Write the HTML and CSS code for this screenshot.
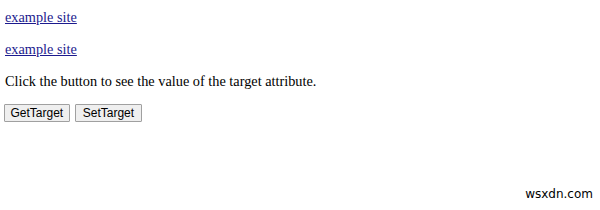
FILE: index.html
```html
<!DOCTYPE html>
<html>
<head>
<meta charset="utf-8">
<link rel="stylesheet" href="styles.css">
</head>
<body class="page">
<p class="row"><a class="link" href="#">example site</a></p>
<p class="row"><a class="link" href="#">example site</a></p>
<p class="row">Click the button to see the value of the target attribute.</p>
<div class="buttons">
<button class="btn">GetTarget</button>
<button class="btn btn-set">SetTarget</button>
</div>
<div class="watermark">wsxdn.com</div>
</body>
</html>
```
FILE: styles.css
```css
html, body { height: 100%; }
.page {
  margin: 0;
  padding: 8px 4px 0 5px;
  box-sizing: border-box;
  font-family: "Liberation Serif", serif;
  font-size: 14.3px;
  color: #000;
  background: #fff;
  position: relative;
}
.row { margin: 0 0 14px; line-height: 18px; }
.link { color: #1c1a8e; }
.buttons { display: flex; gap: 5px; margin-left: -1px; }
.btn {
  font-family: "Liberation Sans", sans-serif;
  font-size: 12px;
  height: 18px;
  padding: 0 5.5px;
  background: #efefef;
  border: 1px solid #a0a0a0;
  border-radius: 1px;
  color: #000;
}
.btn-set { padding: 0 7px; }
.watermark {
  position: absolute;
  right: 7px;
  bottom: 9px;
  font-family: "DejaVu Sans", sans-serif;
  font-size: 12px;
  color: #000;
}
```
